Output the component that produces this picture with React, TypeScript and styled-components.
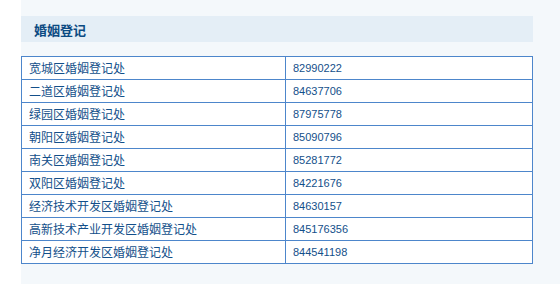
import React from "react";
import styled, { createGlobalStyle } from "styled-components";

interface Office {
  name: string;
  phone: string;
}

const offices: Office[] = [
  { name: "宽城区婚姻登记处", phone: "82990222" },
  { name: "二道区婚姻登记处", phone: "84637706" },
  { name: "绿园区婚姻登记处", phone: "87975778" },
  { name: "朝阳区婚姻登记处", phone: "85090796" },
  { name: "南关区婚姻登记处", phone: "85281772" },
  { name: "双阳区婚姻登记处", phone: "84221676" },
  { name: "经济技术开发区婚姻登记处", phone: "84630157" },
  { name: "高新技术产业开发区婚姻登记处", phone: "845176356" },
  { name: "净月经济开发区婚姻登记处", phone: "844541198" },
];

const GlobalStyle = createGlobalStyle`
  html, body {
    margin: 0;
    padding: 0;
    background: #ffffff;
  }
  body {
    font-family: "Noto Sans CJK SC", "Liberation Sans", sans-serif;
  }
`;

const Page = styled.div`
  height: 284px;
  padding-left: 21px;
  overflow: hidden;
`;

const Panel = styled.div`
  height: 100%;
  background: #f4f8fb;
  padding: 16px 0 0 0;
  box-sizing: border-box;
`;

const Header = styled.div`
  width: 512px;
  height: 26px;
  background: #e4eef6;
  display: flex;
  align-items: center;
  padding-left: 13px;
  box-sizing: border-box;
  color: #0b4a82;
  font-size: 13px;
  font-weight: bold;
`;

const Table = styled.table`
  margin-top: 14px;
  width: 512px;
  border-collapse: collapse;
  background: #ffffff;
  table-layout: fixed;
`;

const Cell = styled.td<{ $numeric?: boolean }>`
  height: 22px;
  padding: 0 0 0 7px;
  border: 1px solid #4d86cb;
  color: #134f8a;
  font-size: ${(p) => (p.$numeric ? "11px" : "12px")};
  font-family: ${(p) =>
    p.$numeric
      ? `"Liberation Sans", sans-serif`
      : `"Noto Sans CJK SC", sans-serif`};
  line-height: 22px;
  white-space: nowrap;
  vertical-align: middle;
`;

const NameCol = styled.col`
  width: 264px;
`;

export default function App() {
  return (
    <>
      <GlobalStyle />
      <Page>
        <Panel>
          <Header>婚姻登记</Header>
          <Table>
            <colgroup>
              <NameCol />
              <col />
            </colgroup>
            <tbody>
              {offices.map((o) => (
                <tr key={o.name}>
                  <Cell>{o.name}</Cell>
                  <Cell $numeric>{o.phone}</Cell>
                </tr>
              ))}
            </tbody>
          </Table>
        </Panel>
      </Page>
    </>
  );
}
